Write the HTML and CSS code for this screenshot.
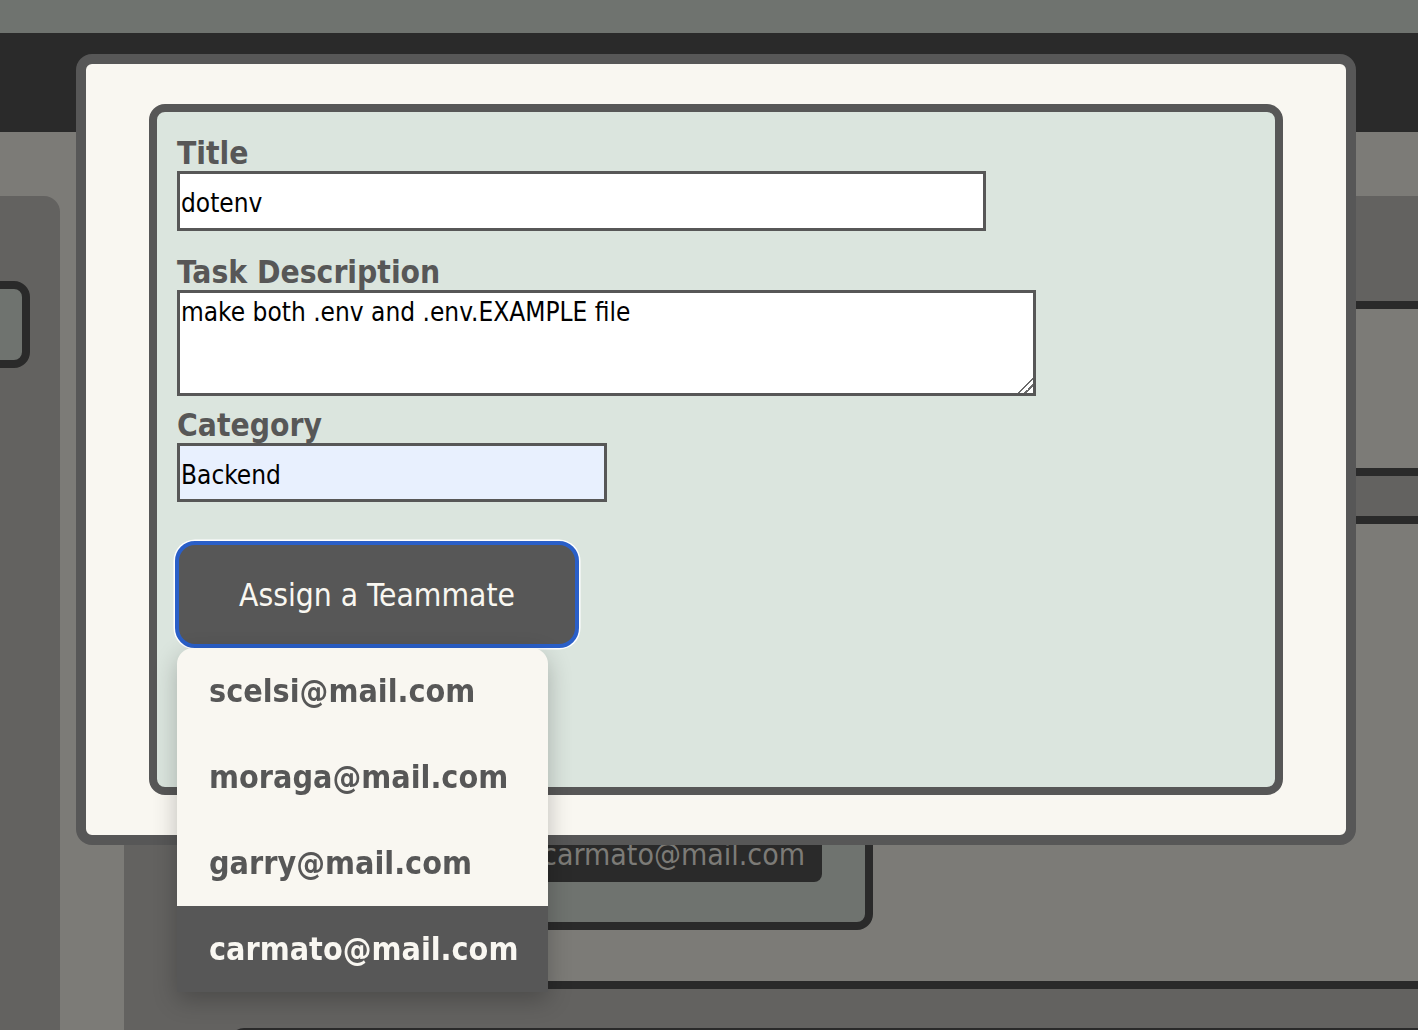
FILE: index.html
```html
<!DOCTYPE html>
<html lang="en">
<head>
<meta charset="utf-8">
<title>Task</title>
<link rel="stylesheet" href="styles.css">
</head>
<body>
<div class="app">
  <div class="topbar"></div>
  <header class="header"></header>
  <main class="board">
    <section class="column column-left">
      <div class="left-card"></div>
    </section>
    <section class="column column-main">
      <div class="task-card task-card-first"></div>
      <div class="task-card task-card-second">
        <div class="inner-card">
          <span class="assignee-pill">carmato@mail.com</span>
        </div>
      </div>
      <div class="task-card task-card-third"></div>
    </section>
  </main>
</div>

<div class="overlay">
  <div class="modal">
    <form class="task-form">
      <label class="field-label" for="title">Title</label>
      <input id="title" class="field-input title-input" type="text" value="dotenv">
      <label class="field-label label-desc" for="desc">Task Description</label>
      <textarea id="desc" class="field-input desc-input">make both .env and .env.EXAMPLE file</textarea>
      <label class="field-label label-cat" for="cat">Category</label>
      <input id="cat" class="field-input cat-input" type="text" value="Backend">
      <div class="assign">
        <button type="button" class="assign-btn">Assign a Teammate</button>
        <ul class="assign-menu">
          <li class="assign-item">scelsi@mail.com</li>
          <li class="assign-item">moraga@mail.com</li>
          <li class="assign-item">garry@mail.com</li>
          <li class="assign-item is-active">carmato@mail.com</li>
        </ul>
      </div>
    </form>
  </div>
</div>
</body>
</html>
```

FILE: styles.css
```css
* { box-sizing: border-box; }

html, body {
  margin: 0;
  padding: 0;
  width: 1418px;
  height: 1030px;
  overflow: hidden;
}

body {
  background: #7c7b77;
  font-family: "DejaVu Sans Condensed", "DejaVu Sans", sans-serif;
  font-stretch: condensed;
}

/* ---------- background app ---------- */
.app {
  display: flex;
  flex-direction: column;
  height: 1030px;
}

.topbar {
  height: 33px;
  background: #6f736f;
  flex: none;
}

.header {
  height: 99px;
  background: #2a2a2a;
  flex: none;
}

.board {
  flex: 1;
  display: flex;
  gap: 64px;
  padding-top: 64px;
  overflow: hidden;
}

.column {
  background: #636260;
  flex: none;
}

.column-left {
  width: 60px;
  border-top-right-radius: 16px;
  padding-top: 85px;
  overflow: hidden;
}

.left-card {
  width: 62px;
  height: 87px;
  margin-left: -32px;
  background: #6f736f;
  border: 8px solid #2a2a2a;
  border-radius: 16px;
}

.column-main {
  width: 1400px;
  padding: 105px 0 0 106px;
  display: flex;
  flex-direction: column;
  gap: 40px;
}

.task-card {
  width: 1300px;
  background: #7c7b77;
  border: 8px solid #2a2a2a;
  border-radius: 14px;
  flex: none;
}

.task-card-first { height: 175px; }

.task-card-second {
  height: 473px;
  display: flex;
  flex-direction: column;
  justify-content: flex-end;
  padding: 0 0 51px 22px;
}

.task-card-third { height: 200px; margin-top: -1px; }

.inner-card {
  width: 613px;
  height: 330px;
  background: #6f736f;
  border: 8px solid #2a2a2a;
  border-radius: 16px;
  display: flex;
  justify-content: flex-end;
  align-items: flex-end;
  padding: 0 43px 40px 0;
}

.assignee-pill {
  background: #2a2a2a;
  color: #7c7b77;
  font-size: 30px;
  line-height: 35px;
  padding: 6px 17px 10px 17px;
  border-radius: 8px;
}

/* ---------- modal ---------- */
.overlay {
  position: fixed;
  inset: 0;
  padding: 54px 0 0 76px;
}

.modal {
  width: 1280px;
  height: 791px;
  background: #f9f7f1;
  border: 10px solid #575757;
  border-radius: 16px;
  padding: 40px 63px;
  display: flex;
  flex-direction: column;
}

.task-form {
  flex: 1;
  margin: 0;
  background: #dbe5de;
  border: 8px solid #575757;
  border-radius: 16px;
  padding: 23px 20px;
  display: flex;
  flex-direction: column;
  align-items: flex-start;
}

.field-label {
  color: #575757;
  font-weight: bold;
  font-size: 31.5px;
  line-height: 36px;
  height: 36px;
}

.label-desc { margin-top: 23px; }
.label-cat { margin-top: 11px; }

.field-input {
  font-family: inherit;
  font-stretch: condensed;
  font-size: 26px;
  color: #000;
  background: #fff;
  border: 3px solid #575757;
  border-radius: 0;
  padding: 4px 1px 0 1px;
  margin: 0;
  outline: none;
}

.title-input {
  width: 809px;
  height: 60px;
}

.desc-input {
  width: 859px;
  height: 106px;
  padding: 4px 1px;
  line-height: 30px;
  resize: both;
}

.desc-input::-webkit-resizer {
  background: linear-gradient(135deg,
    transparent 0 47%,
    #6a6a6a 47% 55%,
    transparent 55% 70%,
    #6a6a6a 70% 78%,
    transparent 78%);
}

.cat-input {
  width: 430px;
  height: 59px;
  background: #e8f0fe;
}

.assign {
  position: relative;
  margin-top: 39px;
  margin-left: -2px;
}

.assign-btn {
  width: 404px;
  height: 107px;
  background: #575757;
  color: #f9f7f1;
  border: 4px solid #2a5fc8;
  border-radius: 20px;
  box-shadow: 0 0 0 1.5px #ffffff;
  font-family: inherit;
  font-stretch: condensed;
  font-size: 31.5px;
  padding: 0;
  display: flex;
  align-items: center;
  justify-content: center;
}

.assign-menu {
  position: absolute;
  top: 100%;
  left: 2px;
  width: 371px;
  margin: 0;
  padding: 0;
  list-style: none;
  background: #f9f7f1;
  border-radius: 16px 16px 0 0;
  box-shadow: 0 8px 24px 0 rgba(0, 0, 0, 0.24);
  z-index: 5;
}

.assign-item {
  padding: 25px 32px;
  line-height: 36px;
  font-size: 32px;
  font-weight: bold;
  color: #575757;
  white-space: nowrap;
}

.assign-item.is-active {
  background: #575757;
  color: #f9f7f1;
}
```
